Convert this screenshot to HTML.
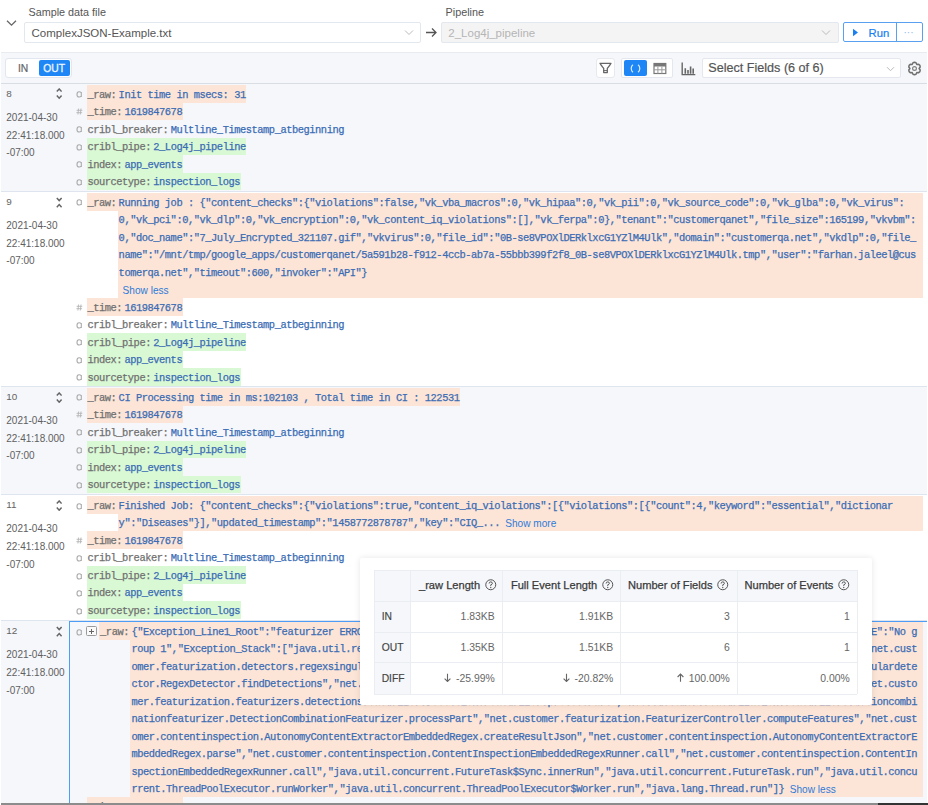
<!DOCTYPE html><html><head><meta charset="utf-8"><style>
*{box-sizing:border-box;margin:0;padding:0}
html,body{width:928px;height:805px;overflow:hidden;background:#fff;font-family:"Liberation Sans",sans-serif;position:relative}
.a{position:absolute;white-space:pre}
.m{font-family:"Liberation Mono",monospace;font-size:10.4px;letter-spacing:-0.458px;margin-top:1.6px;-webkit-text-stroke:0.25px}
.s{font-family:"Liberation Sans",sans-serif}
</style></head><body><svg class="a" style="left:5px;top:18px" width="13" height="10" viewBox="0 0 13 10"><path d="M2 2.8 L6.5 7.2 L11 2.8" fill="none" stroke="#666" stroke-width="1.3"/></svg><div class="a" style="left:28.5px;top:4.5px;font-size:10.8px;color:#555;line-height:14px">Sample data file</div><div class="a" style="left:24px;top:22px;width:397px;height:20.5px;border:1px solid #e3e8ef;border-radius:2px;background:#fff"></div><div class="a" style="left:31.5px;top:27px;font-size:11.5px;color:#555;line-height:13px">ComplexJSON-Example.txt</div><svg class="a" style="left:404px;top:29px" width="10" height="8" viewBox="0 0 10 8"><path d="M1 1.5 L5 5.5 L9 1.5" fill="none" stroke="#bbb" stroke-width="1"/></svg><svg class="a" style="left:425px;top:27px" width="13" height="11" viewBox="0 0 13 11"><path d="M1 5.5 H11 M7 1.5 L11 5.5 L7 9.5" fill="none" stroke="#555" stroke-width="1.3"/></svg><div class="a" style="left:445.6px;top:4.8px;font-size:10.8px;color:#555;line-height:14px">Pipeline</div><div class="a" style="left:441px;top:22px;width:398px;height:20.5px;border:1px solid #e3e8ef;border-radius:2px;background:#f4f4f4"></div><div class="a" style="left:448.3px;top:27px;font-size:11.5px;color:#b5b5b5;line-height:13px">2_Log4j_pipeline</div><svg class="a" style="left:821px;top:29px" width="10" height="8" viewBox="0 0 10 8"><path d="M1 1.5 L5 5.5 L9 1.5" fill="none" stroke="#bbb" stroke-width="1"/></svg><div class="a" style="left:843.4px;top:21.7px;width:80px;height:20.7px;border:1px solid #5aa0f0;border-radius:2px;background:#fff"></div><div class="a" style="left:895.5px;top:21.7px;width:1px;height:20.7px;background:#5aa0f0"></div><svg class="a" style="left:852px;top:28px" width="7" height="9" viewBox="0 0 7 9"><path d="M1 0.8 L6 4.5 L1 8.2Z" fill="#1a7ff0"/></svg><div class="a" style="left:868.5px;top:26.5px;font-size:11.3px;color:#1a7ff0;line-height:13px;-webkit-text-stroke:0.2px">Run</div><div class="a" style="left:903.5px;top:25.5px;font-size:10px;color:#8ab8f0;line-height:13px;letter-spacing:0px">···</div><div class="a" style="left:1px;top:52px;width:926px;height:32px;background:#f5f7fa;border-top:1px solid #e8ebf0;border-bottom:1px solid #d9dee5"></div><div class="a" style="left:5.2px;top:57.5px;width:67.3px;height:20.8px;background:#fff;border:1px solid #e2e6ee;border-radius:3px"></div><div class="a" style="left:18px;top:61.5px;font-size:10.3px;color:#666;line-height:13px;-webkit-text-stroke:0.2px">IN</div><div class="a" style="left:38.8px;top:60px;width:31.2px;height:15.7px;background:#1e87f5;border-radius:2px"></div><div class="a" style="left:43.2px;top:61.5px;font-size:10.3px;color:#eef5ff;line-height:13px;-webkit-text-stroke:0.3px">OUT</div><div class="a" style="left:595.5px;top:57.8px;width:19.5px;height:20.5px;background:#fff;border:1px solid #e6e9ee;border-radius:3px"></div><svg class="a" style="left:599px;top:62px" width="13" height="12" viewBox="0 0 13 12"><path d="M1 1.3 H12 Q11.5 2.5 8.3 6.3 V10.6 H4.7 V6.3 Q1.5 2.5 1 1.3 Z" fill="none" stroke="#666" stroke-width="1.3" stroke-linejoin="round"/><path d="M4.9 8.6 H8.1" stroke="#666" stroke-width="1"/></svg><div class="a" style="left:621px;top:57.8px;width:52px;height:20.5px;background:#fff;border:1px solid #e4e8ee;border-radius:2px"></div><div class="a" style="left:623.6px;top:60.3px;width:23.4px;height:15.8px;background:#1e87f5;border-radius:2px"></div><svg class="a" style="left:630px;top:64px" width="11" height="9" viewBox="0 0 11 9"><path d="M3 0.8 Q1.2 2 1.2 4.5 Q1.2 7 3 8.2 M8 0.8 Q9.8 2 9.8 4.5 Q9.8 7 8 8.2" fill="none" stroke="#dbeafe" stroke-width="1.2"/></svg><svg class="a" style="left:653px;top:61.5px" width="14" height="13" viewBox="0 0 14 13"><rect x="1" y="1.5" width="11.8" height="10" fill="none" stroke="#777" stroke-width="1.2"/><rect x="1" y="1.5" width="11.8" height="3" fill="#777"/><path d="M1 7.8 H12.8 M4.9 4.5 V11.5 M8.9 4.5 V11.5" stroke="#999" stroke-width="1"/></svg><svg class="a" style="left:681px;top:62px" width="15" height="14" viewBox="0 0 15 14"><path d="M1.2 0.5 V12.6 H14.3" fill="none" stroke="#666" stroke-width="1.4"/><path d="M4.3 11.8 V6.2 M7 11.8 V8 M9.6 11.8 V4.5 M12.2 11.8 V6.6" stroke="#666" stroke-width="1.6"/></svg><div class="a" style="left:702.2px;top:58.3px;width:198.5px;height:19.6px;background:#fff;border:1px solid #e4e8ee;border-radius:2px"></div><div class="a" style="left:708.3px;top:61.2px;font-size:12.6px;color:#555;line-height:15px;-webkit-text-stroke:0.2px">Select Fields (6 of 6)</div><svg class="a" style="left:886px;top:65.5px" width="9" height="7" viewBox="0 0 9 7"><path d="M1 1.2 L4.5 4.7 L8 1.2" fill="none" stroke="#bbb" stroke-width="1"/></svg><svg class="a" style="left:907px;top:60.5px" width="15" height="15" viewBox="0 0 15 15"><path d="M7.50 1.30 L9.03 1.80 L9.80 3.52 L11.67 3.33 L12.87 4.40 L13.20 5.97 L12.10 7.50 L13.20 9.03 L12.87 10.60 L11.67 11.67 L9.80 11.48 L9.03 13.20 L7.50 13.70 L5.97 13.20 L5.20 11.48 L3.33 11.67 L2.13 10.60 L1.80 9.03 L2.90 7.50 L1.80 5.97 L2.13 4.40 L3.33 3.33 L5.20 3.52 L5.97 1.80 Z" fill="none" stroke="#707070" stroke-width="1.5" stroke-linejoin="round"/><circle cx="7.5" cy="7.5" r="1.9" fill="none" stroke="#808080" stroke-width="1.2"/></svg><div class="a" style="left:1px;top:84px;width:926px;height:107px;background:#f5f7fb"></div><div class="a s" style="left:6.3px;top:88.0px;font-size:9.9px;color:#636363;line-height:12px">8</div><svg class="a" style="left:55.7px;top:88.4px" width="6.5" height="11.5" viewBox="0 0 6.5 11.5"><path d="M0.8 3.6 L3.2 1 L5.6 3.6 M0.8 7.6 L3.2 10.2 L5.6 7.6" fill="none" stroke="#666" stroke-width="1.5"/></svg><div class="a s" style="left:6.3px;top:112.0px;font-size:10px;color:#606060;line-height:12px">2021-04-30</div><div class="a s" style="left:6.3px;top:129.6px;font-size:10px;color:#606060;line-height:12px">22:41:18.000</div><div class="a s" style="left:6.3px;top:147.2px;font-size:10px;color:#606060;line-height:12px">-07:00</div><svg class="a" style="left:75.6px;top:91.2px" width="7" height="7" viewBox="0 0 7 7"><path d="M5.2 1.6 Q4.4 0.8 3.1 0.8 Q1 0.8 1 3.4 Q1 6 3.1 6 Q4.4 6 5.2 5 M5.3 0.9 V6.1" fill="none" stroke="#aaa" stroke-width="1.1"/></svg><div class="a" style="left:86.6px;top:85.0px;width:32.50999999999999px;height:17.5px;background:#fce5d6"></div><div class="a" style="left:118.60999999999999px;top:85.0px;width:127.70400000000001px;height:17.5px;background:#fce5d6"></div><div class="a m" style="left:87.39999999999999px;top:85.0px;line-height:17.5px;color:#707070">_raw:</div><div class="a m" style="left:118.60999999999999px;top:85.0px;line-height:17.5px;color:#3a6cb5">Init time in msecs: 31</div><svg class="a" style="left:75.6px;top:108.10000000000001px" width="7" height="7" viewBox="0 0 7 7"><path d="M2.6 0.5 L1.9 6.5 M5 0.5 L4.3 6.5 M0.6 2.3 H6.3 M0.4 4.7 H6.1" fill="none" stroke="#b5b5b5" stroke-width="0.9"/></svg><div class="a" style="left:86.6px;top:102.5px;width:38.29199999999999px;height:17.5px;background:#fce5d6"></div><div class="a" style="left:124.39199999999998px;top:102.5px;width:58.32px;height:17.5px;background:#fce5d6"></div><div class="a m" style="left:87.39999999999999px;top:102.5px;line-height:17.5px;color:#707070">_time:</div><div class="a m" style="left:124.39199999999998px;top:102.5px;line-height:17.5px;color:#3a6cb5">1619847678</div><svg class="a" style="left:75.6px;top:126.2px" width="7" height="7" viewBox="0 0 7 7"><path d="M5.2 1.6 Q4.4 0.8 3.1 0.8 Q1 0.8 1 3.4 Q1 6 3.1 6 Q4.4 6 5.2 5 M5.3 0.9 V6.1" fill="none" stroke="#aaa" stroke-width="1.1"/></svg><div class="a m" style="left:87.39999999999999px;top:120.0px;line-height:17.5px;color:#707070">cribl_breaker:</div><div class="a m" style="left:170.64800000000002px;top:120.0px;line-height:17.5px;color:#3a6cb5">Multline_Timestamp_atbeginning</div><svg class="a" style="left:75.6px;top:143.7px" width="7" height="7" viewBox="0 0 7 7"><path d="M5.2 1.6 Q4.4 0.8 3.1 0.8 Q1 0.8 1 3.4 Q1 6 3.1 6 Q4.4 6 5.2 5 M5.3 0.9 V6.1" fill="none" stroke="#aaa" stroke-width="1.1"/></svg><div class="a" style="left:86.6px;top:137.5px;width:67.20200000000003px;height:17.5px;background:#d9f8d4"></div><div class="a" style="left:153.30200000000002px;top:137.5px;width:93.012px;height:17.5px;background:#d9f8d4"></div><div class="a m" style="left:87.39999999999999px;top:137.5px;line-height:17.5px;color:#707070">cribl_pipe:</div><div class="a m" style="left:153.30200000000002px;top:137.5px;line-height:17.5px;color:#3a6cb5">2_Log4j_pipeline</div><svg class="a" style="left:75.6px;top:161.2px" width="7" height="7" viewBox="0 0 7 7"><path d="M5.2 1.6 Q4.4 0.8 3.1 0.8 Q1 0.8 1 3.4 Q1 6 3.1 6 Q4.4 6 5.2 5 M5.3 0.9 V6.1" fill="none" stroke="#aaa" stroke-width="1.1"/></svg><div class="a" style="left:86.6px;top:155.0px;width:38.29199999999999px;height:17.5px;background:#d9f8d4"></div><div class="a" style="left:124.39199999999998px;top:155.0px;width:58.32px;height:17.5px;background:#d9f8d4"></div><div class="a m" style="left:87.39999999999999px;top:155.0px;line-height:17.5px;color:#707070">index:</div><div class="a m" style="left:124.39199999999998px;top:155.0px;line-height:17.5px;color:#3a6cb5">app_events</div><svg class="a" style="left:75.6px;top:178.7px" width="7" height="7" viewBox="0 0 7 7"><path d="M5.2 1.6 Q4.4 0.8 3.1 0.8 Q1 0.8 1 3.4 Q1 6 3.1 6 Q4.4 6 5.2 5 M5.3 0.9 V6.1" fill="none" stroke="#aaa" stroke-width="1.1"/></svg><div class="a" style="left:86.6px;top:172.5px;width:67.20200000000003px;height:17.5px;background:#d9f8d4"></div><div class="a" style="left:153.30200000000002px;top:172.5px;width:87.23px;height:17.5px;background:#d9f8d4"></div><div class="a m" style="left:87.39999999999999px;top:172.5px;line-height:17.5px;color:#707070">sourcetype:</div><div class="a m" style="left:153.30200000000002px;top:172.5px;line-height:17.5px;color:#3a6cb5">inspection_logs</div><div class="a" style="left:1px;top:190.5px;width:926px;height:1.2px;background:#dfe5ee"></div><div class="a s" style="left:6.3px;top:196.2px;font-size:9.9px;color:#636363;line-height:12px">9</div><svg class="a" style="left:55.7px;top:196.6px" width="6.5" height="11.5" viewBox="0 0 6.5 11.5"><path d="M0.8 1 L3.2 3.6 L5.6 1 M0.8 10.2 L3.2 7.6 L5.6 10.2" fill="none" stroke="#666" stroke-width="1.5"/></svg><div class="a s" style="left:6.3px;top:220.2px;font-size:10px;color:#606060;line-height:12px">2021-04-30</div><div class="a s" style="left:6.3px;top:237.79999999999998px;font-size:10px;color:#606060;line-height:12px">22:41:18.000</div><div class="a s" style="left:6.3px;top:255.39999999999998px;font-size:10px;color:#606060;line-height:12px">-07:00</div><svg class="a" style="left:75.6px;top:199.39999999999998px" width="7" height="7" viewBox="0 0 7 7"><path d="M5.2 1.6 Q4.4 0.8 3.1 0.8 Q1 0.8 1 3.4 Q1 6 3.1 6 Q4.4 6 5.2 5 M5.3 0.9 V6.1" fill="none" stroke="#aaa" stroke-width="1.1"/></svg><div class="a" style="left:86.6px;top:193.2px;width:32.50999999999999px;height:17.5px;background:#fce5d6"></div><div class="a" style="left:117.60999999999999px;top:193.2px;width:805.1899999999999px;height:105.0px;background:#fce5d6"></div><div class="a m" style="left:87.39999999999999px;top:193.2px;line-height:17.5px;color:#707070">_raw:</div><div class="a m" style="left:118.60999999999999px;top:193.2px;line-height:17.5px;color:#3a6cb5">Running job : {"content_checks":{"violations":false,"vk_vba_macros":0,"vk_hipaa":0,"vk_pii":0,"vk_source_code":0,"vk_glba":0,"vk_virus":</div><div class="a m" style="left:118.60999999999999px;top:210.7px;line-height:17.5px;color:#3a6cb5">0,"vk_pci":0,"vk_dlp":0,"vk_encryption":0,"vk_content_iq_violations":[],"vk_ferpa":0},"tenant":"customerqanet","file_size":165199,"vkvbm":</div><div class="a m" style="left:118.60999999999999px;top:228.2px;line-height:17.5px;color:#3a6cb5">0,"doc_name":"7_July_Encrypted_321107.gif","vkvirus":0,"file_id":"0B-se8VPOXlDERklxcG1YZlM4Ulk","domain":"customerqa.net","vkdlp":0,"file_</div><div class="a m" style="left:118.60999999999999px;top:245.7px;line-height:17.5px;color:#3a6cb5">name":"/mnt/tmp/google_apps/customerqanet/5a591b28-f912-4ccb-ab7a-55bbb399f2f8_0B-se8VPOXlDERklxcG1YZlM4Ulk.tmp","user":"farhan.jaleel@cus</div><div class="a m" style="left:118.60999999999999px;top:263.2px;line-height:17.5px;color:#3a6cb5">tomerqa.net","timeout":600,"invoker":"API"}</div><div class="a s" style="left:122.60999999999999px;top:282.0px;line-height:17.5px;font-size:10.1px;color:#2f7ad8">Show less</div><svg class="a" style="left:75.6px;top:303.79999999999995px" width="7" height="7" viewBox="0 0 7 7"><path d="M2.6 0.5 L1.9 6.5 M5 0.5 L4.3 6.5 M0.6 2.3 H6.3 M0.4 4.7 H6.1" fill="none" stroke="#b5b5b5" stroke-width="0.9"/></svg><div class="a" style="left:86.6px;top:298.2px;width:38.29199999999999px;height:17.5px;background:#fce5d6"></div><div class="a" style="left:124.39199999999998px;top:298.2px;width:58.32px;height:17.5px;background:#fce5d6"></div><div class="a m" style="left:87.39999999999999px;top:298.2px;line-height:17.5px;color:#707070">_time:</div><div class="a m" style="left:124.39199999999998px;top:298.2px;line-height:17.5px;color:#3a6cb5">1619847678</div><svg class="a" style="left:75.6px;top:321.9px" width="7" height="7" viewBox="0 0 7 7"><path d="M5.2 1.6 Q4.4 0.8 3.1 0.8 Q1 0.8 1 3.4 Q1 6 3.1 6 Q4.4 6 5.2 5 M5.3 0.9 V6.1" fill="none" stroke="#aaa" stroke-width="1.1"/></svg><div class="a m" style="left:87.39999999999999px;top:315.7px;line-height:17.5px;color:#707070">cribl_breaker:</div><div class="a m" style="left:170.64800000000002px;top:315.7px;line-height:17.5px;color:#3a6cb5">Multline_Timestamp_atbeginning</div><svg class="a" style="left:75.6px;top:339.4px" width="7" height="7" viewBox="0 0 7 7"><path d="M5.2 1.6 Q4.4 0.8 3.1 0.8 Q1 0.8 1 3.4 Q1 6 3.1 6 Q4.4 6 5.2 5 M5.3 0.9 V6.1" fill="none" stroke="#aaa" stroke-width="1.1"/></svg><div class="a" style="left:86.6px;top:333.2px;width:67.20200000000003px;height:17.5px;background:#d9f8d4"></div><div class="a" style="left:153.30200000000002px;top:333.2px;width:93.012px;height:17.5px;background:#d9f8d4"></div><div class="a m" style="left:87.39999999999999px;top:333.2px;line-height:17.5px;color:#707070">cribl_pipe:</div><div class="a m" style="left:153.30200000000002px;top:333.2px;line-height:17.5px;color:#3a6cb5">2_Log4j_pipeline</div><svg class="a" style="left:75.6px;top:356.9px" width="7" height="7" viewBox="0 0 7 7"><path d="M5.2 1.6 Q4.4 0.8 3.1 0.8 Q1 0.8 1 3.4 Q1 6 3.1 6 Q4.4 6 5.2 5 M5.3 0.9 V6.1" fill="none" stroke="#aaa" stroke-width="1.1"/></svg><div class="a" style="left:86.6px;top:350.7px;width:38.29199999999999px;height:17.5px;background:#d9f8d4"></div><div class="a" style="left:124.39199999999998px;top:350.7px;width:58.32px;height:17.5px;background:#d9f8d4"></div><div class="a m" style="left:87.39999999999999px;top:350.7px;line-height:17.5px;color:#707070">index:</div><div class="a m" style="left:124.39199999999998px;top:350.7px;line-height:17.5px;color:#3a6cb5">app_events</div><svg class="a" style="left:75.6px;top:374.4px" width="7" height="7" viewBox="0 0 7 7"><path d="M5.2 1.6 Q4.4 0.8 3.1 0.8 Q1 0.8 1 3.4 Q1 6 3.1 6 Q4.4 6 5.2 5 M5.3 0.9 V6.1" fill="none" stroke="#aaa" stroke-width="1.1"/></svg><div class="a" style="left:86.6px;top:368.2px;width:67.20200000000003px;height:17.5px;background:#d9f8d4"></div><div class="a" style="left:153.30200000000002px;top:368.2px;width:87.23px;height:17.5px;background:#d9f8d4"></div><div class="a m" style="left:87.39999999999999px;top:368.2px;line-height:17.5px;color:#707070">sourcetype:</div><div class="a m" style="left:153.30200000000002px;top:368.2px;line-height:17.5px;color:#3a6cb5">inspection_logs</div><div class="a" style="left:1px;top:386.5px;width:926px;height:108.19999999999999px;background:#f5f7fb"></div><div class="a" style="left:1px;top:386.0px;width:926px;height:1.2px;background:#dfe5ee"></div><div class="a s" style="left:6.3px;top:391.2px;font-size:9.9px;color:#636363;line-height:12px">10</div><svg class="a" style="left:55.7px;top:391.59999999999997px" width="6.5" height="11.5" viewBox="0 0 6.5 11.5"><path d="M0.8 3.6 L3.2 1 L5.6 3.6 M0.8 7.6 L3.2 10.2 L5.6 7.6" fill="none" stroke="#666" stroke-width="1.5"/></svg><div class="a s" style="left:6.3px;top:415.2px;font-size:10px;color:#606060;line-height:12px">2021-04-30</div><div class="a s" style="left:6.3px;top:432.8px;font-size:10px;color:#606060;line-height:12px">22:41:18.000</div><div class="a s" style="left:6.3px;top:450.4px;font-size:10px;color:#606060;line-height:12px">-07:00</div><svg class="a" style="left:75.6px;top:394.4px" width="7" height="7" viewBox="0 0 7 7"><path d="M5.2 1.6 Q4.4 0.8 3.1 0.8 Q1 0.8 1 3.4 Q1 6 3.1 6 Q4.4 6 5.2 5 M5.3 0.9 V6.1" fill="none" stroke="#aaa" stroke-width="1.1"/></svg><div class="a" style="left:86.6px;top:388.2px;width:32.50999999999999px;height:17.5px;background:#fce5d6"></div><div class="a" style="left:118.60999999999999px;top:388.2px;width:341.638px;height:17.5px;background:#fce5d6"></div><div class="a m" style="left:87.39999999999999px;top:388.2px;line-height:17.5px;color:#707070">_raw:</div><div class="a m" style="left:118.60999999999999px;top:388.2px;line-height:17.5px;color:#3a6cb5">CI Processing time in ms:102103 , Total time in CI : 122531</div><svg class="a" style="left:75.6px;top:411.29999999999995px" width="7" height="7" viewBox="0 0 7 7"><path d="M2.6 0.5 L1.9 6.5 M5 0.5 L4.3 6.5 M0.6 2.3 H6.3 M0.4 4.7 H6.1" fill="none" stroke="#b5b5b5" stroke-width="0.9"/></svg><div class="a" style="left:86.6px;top:405.7px;width:38.29199999999999px;height:17.5px;background:#fce5d6"></div><div class="a" style="left:124.39199999999998px;top:405.7px;width:58.32px;height:17.5px;background:#fce5d6"></div><div class="a m" style="left:87.39999999999999px;top:405.7px;line-height:17.5px;color:#707070">_time:</div><div class="a m" style="left:124.39199999999998px;top:405.7px;line-height:17.5px;color:#3a6cb5">1619847678</div><svg class="a" style="left:75.6px;top:429.4px" width="7" height="7" viewBox="0 0 7 7"><path d="M5.2 1.6 Q4.4 0.8 3.1 0.8 Q1 0.8 1 3.4 Q1 6 3.1 6 Q4.4 6 5.2 5 M5.3 0.9 V6.1" fill="none" stroke="#aaa" stroke-width="1.1"/></svg><div class="a m" style="left:87.39999999999999px;top:423.2px;line-height:17.5px;color:#707070">cribl_breaker:</div><div class="a m" style="left:170.64800000000002px;top:423.2px;line-height:17.5px;color:#3a6cb5">Multline_Timestamp_atbeginning</div><svg class="a" style="left:75.6px;top:446.9px" width="7" height="7" viewBox="0 0 7 7"><path d="M5.2 1.6 Q4.4 0.8 3.1 0.8 Q1 0.8 1 3.4 Q1 6 3.1 6 Q4.4 6 5.2 5 M5.3 0.9 V6.1" fill="none" stroke="#aaa" stroke-width="1.1"/></svg><div class="a" style="left:86.6px;top:440.7px;width:67.20200000000003px;height:17.5px;background:#d9f8d4"></div><div class="a" style="left:153.30200000000002px;top:440.7px;width:93.012px;height:17.5px;background:#d9f8d4"></div><div class="a m" style="left:87.39999999999999px;top:440.7px;line-height:17.5px;color:#707070">cribl_pipe:</div><div class="a m" style="left:153.30200000000002px;top:440.7px;line-height:17.5px;color:#3a6cb5">2_Log4j_pipeline</div><svg class="a" style="left:75.6px;top:464.4px" width="7" height="7" viewBox="0 0 7 7"><path d="M5.2 1.6 Q4.4 0.8 3.1 0.8 Q1 0.8 1 3.4 Q1 6 3.1 6 Q4.4 6 5.2 5 M5.3 0.9 V6.1" fill="none" stroke="#aaa" stroke-width="1.1"/></svg><div class="a" style="left:86.6px;top:458.2px;width:38.29199999999999px;height:17.5px;background:#d9f8d4"></div><div class="a" style="left:124.39199999999998px;top:458.2px;width:58.32px;height:17.5px;background:#d9f8d4"></div><div class="a m" style="left:87.39999999999999px;top:458.2px;line-height:17.5px;color:#707070">index:</div><div class="a m" style="left:124.39199999999998px;top:458.2px;line-height:17.5px;color:#3a6cb5">app_events</div><svg class="a" style="left:75.6px;top:481.9px" width="7" height="7" viewBox="0 0 7 7"><path d="M5.2 1.6 Q4.4 0.8 3.1 0.8 Q1 0.8 1 3.4 Q1 6 3.1 6 Q4.4 6 5.2 5 M5.3 0.9 V6.1" fill="none" stroke="#aaa" stroke-width="1.1"/></svg><div class="a" style="left:86.6px;top:475.7px;width:67.20200000000003px;height:17.5px;background:#d9f8d4"></div><div class="a" style="left:153.30200000000002px;top:475.7px;width:87.23px;height:17.5px;background:#d9f8d4"></div><div class="a m" style="left:87.39999999999999px;top:475.7px;line-height:17.5px;color:#707070">sourcetype:</div><div class="a m" style="left:153.30200000000002px;top:475.7px;line-height:17.5px;color:#3a6cb5">inspection_logs</div><div class="a" style="left:1px;top:494.2px;width:926px;height:1.2px;background:#dfe5ee"></div><div class="a s" style="left:6.3px;top:499.3px;font-size:9.9px;color:#636363;line-height:12px">11</div><svg class="a" style="left:55.7px;top:499.7px" width="6.5" height="11.5" viewBox="0 0 6.5 11.5"><path d="M0.8 3.6 L3.2 1 L5.6 3.6 M0.8 7.6 L3.2 10.2 L5.6 7.6" fill="none" stroke="#666" stroke-width="1.5"/></svg><div class="a s" style="left:6.3px;top:523.3px;font-size:10px;color:#606060;line-height:12px">2021-04-30</div><div class="a s" style="left:6.3px;top:540.9px;font-size:10px;color:#606060;line-height:12px">22:41:18.000</div><div class="a s" style="left:6.3px;top:558.5px;font-size:10px;color:#606060;line-height:12px">-07:00</div><svg class="a" style="left:75.6px;top:502.5px" width="7" height="7" viewBox="0 0 7 7"><path d="M5.2 1.6 Q4.4 0.8 3.1 0.8 Q1 0.8 1 3.4 Q1 6 3.1 6 Q4.4 6 5.2 5 M5.3 0.9 V6.1" fill="none" stroke="#aaa" stroke-width="1.1"/></svg><div class="a" style="left:86.6px;top:496.3px;width:32.50999999999999px;height:17.5px;background:#fce5d6"></div><div class="a" style="left:117.60999999999999px;top:496.3px;width:805.1899999999999px;height:35.0px;background:#fce5d6"></div><div class="a m" style="left:87.39999999999999px;top:496.3px;line-height:17.5px;color:#707070">_raw:</div><div class="a m" style="left:118.60999999999999px;top:496.3px;line-height:17.5px;color:#3a6cb5">Finished Job: {"content_checks":{"violations":true,"content_iq_violations":[{"violations":[{"count":4,"keyword":"essential","dictionar</div><div class="a m" style="left:118.60999999999999px;top:513.8px;line-height:17.5px;color:#3a6cb5">y":"Diseases"}],"updated_timestamp":"1458772878787","key":"CIQ_...</div><div class="a s" style="left:505.222px;top:515.0999999999999px;line-height:17.5px;font-size:10.1px;color:#2f7ad8">Show more</div><svg class="a" style="left:75.6px;top:536.9px" width="7" height="7" viewBox="0 0 7 7"><path d="M2.6 0.5 L1.9 6.5 M5 0.5 L4.3 6.5 M0.6 2.3 H6.3 M0.4 4.7 H6.1" fill="none" stroke="#b5b5b5" stroke-width="0.9"/></svg><div class="a" style="left:86.6px;top:531.3px;width:38.29199999999999px;height:17.5px;background:#fce5d6"></div><div class="a" style="left:124.39199999999998px;top:531.3px;width:58.32px;height:17.5px;background:#fce5d6"></div><div class="a m" style="left:87.39999999999999px;top:531.3px;line-height:17.5px;color:#707070">_time:</div><div class="a m" style="left:124.39199999999998px;top:531.3px;line-height:17.5px;color:#3a6cb5">1619847678</div><svg class="a" style="left:75.6px;top:555.0px" width="7" height="7" viewBox="0 0 7 7"><path d="M5.2 1.6 Q4.4 0.8 3.1 0.8 Q1 0.8 1 3.4 Q1 6 3.1 6 Q4.4 6 5.2 5 M5.3 0.9 V6.1" fill="none" stroke="#aaa" stroke-width="1.1"/></svg><div class="a m" style="left:87.39999999999999px;top:548.8px;line-height:17.5px;color:#707070">cribl_breaker:</div><div class="a m" style="left:170.64800000000002px;top:548.8px;line-height:17.5px;color:#3a6cb5">Multline_Timestamp_atbeginning</div><svg class="a" style="left:75.6px;top:572.5px" width="7" height="7" viewBox="0 0 7 7"><path d="M5.2 1.6 Q4.4 0.8 3.1 0.8 Q1 0.8 1 3.4 Q1 6 3.1 6 Q4.4 6 5.2 5 M5.3 0.9 V6.1" fill="none" stroke="#aaa" stroke-width="1.1"/></svg><div class="a" style="left:86.6px;top:566.3px;width:67.20200000000003px;height:17.5px;background:#d9f8d4"></div><div class="a" style="left:153.30200000000002px;top:566.3px;width:93.012px;height:17.5px;background:#d9f8d4"></div><div class="a m" style="left:87.39999999999999px;top:566.3px;line-height:17.5px;color:#707070">cribl_pipe:</div><div class="a m" style="left:153.30200000000002px;top:566.3px;line-height:17.5px;color:#3a6cb5">2_Log4j_pipeline</div><svg class="a" style="left:75.6px;top:590.0px" width="7" height="7" viewBox="0 0 7 7"><path d="M5.2 1.6 Q4.4 0.8 3.1 0.8 Q1 0.8 1 3.4 Q1 6 3.1 6 Q4.4 6 5.2 5 M5.3 0.9 V6.1" fill="none" stroke="#aaa" stroke-width="1.1"/></svg><div class="a" style="left:86.6px;top:583.8px;width:38.29199999999999px;height:17.5px;background:#d9f8d4"></div><div class="a" style="left:124.39199999999998px;top:583.8px;width:58.32px;height:17.5px;background:#d9f8d4"></div><div class="a m" style="left:87.39999999999999px;top:583.8px;line-height:17.5px;color:#707070">index:</div><div class="a m" style="left:124.39199999999998px;top:583.8px;line-height:17.5px;color:#3a6cb5">app_events</div><svg class="a" style="left:75.6px;top:607.5px" width="7" height="7" viewBox="0 0 7 7"><path d="M5.2 1.6 Q4.4 0.8 3.1 0.8 Q1 0.8 1 3.4 Q1 6 3.1 6 Q4.4 6 5.2 5 M5.3 0.9 V6.1" fill="none" stroke="#aaa" stroke-width="1.1"/></svg><div class="a" style="left:86.6px;top:601.3px;width:67.20200000000003px;height:17.5px;background:#d9f8d4"></div><div class="a" style="left:153.30200000000002px;top:601.3px;width:87.23px;height:17.5px;background:#d9f8d4"></div><div class="a m" style="left:87.39999999999999px;top:601.3px;line-height:17.5px;color:#707070">sourcetype:</div><div class="a m" style="left:153.30200000000002px;top:601.3px;line-height:17.5px;color:#3a6cb5">inspection_logs</div><div class="a" style="left:1px;top:620.5px;width:926px;height:184.5px;background:#f5f7fb"></div><div class="a" style="left:1px;top:620.0px;width:926px;height:1.2px;background:#dfe5ee"></div><div class="a s" style="left:6.3px;top:625.3px;font-size:9.9px;color:#636363;line-height:12px">12</div><svg class="a" style="left:55.7px;top:625.6999999999999px" width="6.5" height="11.5" viewBox="0 0 6.5 11.5"><path d="M0.8 1 L3.2 3.6 L5.6 1 M0.8 10.2 L3.2 7.6 L5.6 10.2" fill="none" stroke="#666" stroke-width="1.5"/></svg><div class="a s" style="left:6.3px;top:649.3px;font-size:10px;color:#606060;line-height:12px">2021-04-30</div><div class="a s" style="left:6.3px;top:666.9px;font-size:10px;color:#606060;line-height:12px">22:41:18.000</div><div class="a s" style="left:6.3px;top:684.5px;font-size:10px;color:#606060;line-height:12px">-07:00</div><svg class="a" style="left:75.6px;top:628.5px" width="7" height="7" viewBox="0 0 7 7"><path d="M5.2 1.6 Q4.4 0.8 3.1 0.8 Q1 0.8 1 3.4 Q1 6 3.1 6 Q4.4 6 5.2 5 M5.3 0.9 V6.1" fill="none" stroke="#aaa" stroke-width="1.1"/></svg><div class="a" style="left:86.4px;top:626.3px;width:10.5px;height:10px;border:1.2px solid #9a9a9a;border-radius:1.5px;background:#fafafa"></div><div class="a" style="left:89.2px;top:630.8px;width:5px;height:1.1px;background:#666"></div><div class="a" style="left:91.1px;top:628.9px;width:1.1px;height:5px;background:#666"></div><div class="a" style="left:99.3px;top:622.3px;width:32.61px;height:17.5px;background:#fce5d6"></div><div class="a" style="left:130.41px;top:622.3px;width:792.39px;height:175.0px;background:#fce5d6"></div><div class="a m" style="left:100.1px;top:622.3px;line-height:17.5px;color:#707070">_raw:</div><div class="a m" style="left:131.41px;top:622.3px;line-height:17.5px;color:#3a6cb5">{"Exception_Line1_Root":"featurizer ERROR: No match found","Exception_Line1_Message":"featurizer ERROR","Exception_Line2_Root":"E":"No g</div><div class="a m" style="left:131.41px;top:639.8px;line-height:17.5px;color:#3a6cb5">roup 1","Exception_Stack":["java.util.regex.Matcher.group(Matcher.java:536)","net.customer.featurization.detectors.regexsing","gnet.cust</div><div class="a m" style="left:131.41px;top:657.3px;line-height:17.5px;color:#3a6cb5">omer.featurization.detectors.regexsingular.RegexSingularDetector.detect","net.customer.featurization.detectors.regexsing","net.culardete</div><div class="a m" style="left:131.41px;top:674.8px;line-height:17.5px;color:#3a6cb5">ctor.RegexDetector.findDetections","net.customer.featurization.detectors.regexsingularRegexDetector.detect","net.customer.featuret.custo</div><div class="a m" style="left:131.41px;top:692.3px;line-height:17.5px;color:#3a6cb5">mer.featurization.featurizers.detectionsfeaturizer.DetectionsFeaturizer.processPart","net.customer.featurization.featurizers.detioncombi</div><div class="a m" style="left:131.41px;top:709.8px;line-height:17.5px;color:#3a6cb5">nationfeaturizer.DetectionCombinationFeaturizer.processPart","net.customer.featurization.FeaturizerController.computeFeatures","net.cust</div><div class="a m" style="left:131.41px;top:727.3px;line-height:17.5px;color:#3a6cb5">omer.contentinspection.AutonomyContentExtractorEmbeddedRegex.createResultJson","net.customer.contentinspection.AutonomyContentExtractorE</div><div class="a m" style="left:131.41px;top:744.8px;line-height:17.5px;color:#3a6cb5">mbeddedRegex.parse","net.customer.contentinspection.ContentInspectionEmbeddedRegexRunner.call","net.customer.contentinspection.ContentIn</div><div class="a m" style="left:131.41px;top:762.3px;line-height:17.5px;color:#3a6cb5">spectionEmbeddedRegexRunner.call","java.util.concurrent.FutureTask$Sync.innerRun","java.util.concurrent.FutureTask.run","java.util.concu</div><div class="a m" style="left:131.41px;top:779.8px;line-height:17.5px;color:#3a6cb5">rrent.ThreadPoolExecutor.runWorker","java.util.concurrent.ThreadPoolExecutor$Worker.run","java.lang.Thread.run"]}</div><div class="a s" style="left:789.776px;top:781.0999999999999px;line-height:17.5px;font-size:10.1px;color:#2f7ad8">Show less</div><svg class="a" style="left:75.6px;top:802.9px" width="7" height="7" viewBox="0 0 7 7"><path d="M2.6 0.5 L1.9 6.5 M5 0.5 L4.3 6.5 M0.6 2.3 H6.3 M0.4 4.7 H6.1" fill="none" stroke="#b5b5b5" stroke-width="0.9"/></svg><div class="a" style="left:86.6px;top:797.3px;width:38.29199999999999px;height:17.5px;background:#fce5d6"></div><div class="a" style="left:124.39199999999998px;top:797.3px;width:58.32px;height:17.5px;background:#fce5d6"></div><div class="a m" style="left:87.39999999999999px;top:797.3px;line-height:17.5px;color:#707070">_time:</div><div class="a m" style="left:124.39199999999998px;top:797.3px;line-height:17.5px;color:#3a6cb5">1619847678</div><svg class="a" style="left:75.6px;top:821.0px" width="7" height="7" viewBox="0 0 7 7"><path d="M5.2 1.6 Q4.4 0.8 3.1 0.8 Q1 0.8 1 3.4 Q1 6 3.1 6 Q4.4 6 5.2 5 M5.3 0.9 V6.1" fill="none" stroke="#aaa" stroke-width="1.1"/></svg><div class="a m" style="left:87.39999999999999px;top:814.8px;line-height:17.5px;color:#707070">cribl_breaker:</div><div class="a m" style="left:170.64800000000002px;top:814.8px;line-height:17.5px;color:#3a6cb5">Multline_Timestamp_atbeginning</div><svg class="a" style="left:75.6px;top:838.5px" width="7" height="7" viewBox="0 0 7 7"><path d="M5.2 1.6 Q4.4 0.8 3.1 0.8 Q1 0.8 1 3.4 Q1 6 3.1 6 Q4.4 6 5.2 5 M5.3 0.9 V6.1" fill="none" stroke="#aaa" stroke-width="1.1"/></svg><div class="a" style="left:86.6px;top:832.3px;width:67.20200000000003px;height:17.5px;background:#d9f8d4"></div><div class="a" style="left:153.30200000000002px;top:832.3px;width:93.012px;height:17.5px;background:#d9f8d4"></div><div class="a m" style="left:87.39999999999999px;top:832.3px;line-height:17.5px;color:#707070">cribl_pipe:</div><div class="a m" style="left:153.30200000000002px;top:832.3px;line-height:17.5px;color:#3a6cb5">2_Log4j_pipeline</div><svg class="a" style="left:75.6px;top:856.0px" width="7" height="7" viewBox="0 0 7 7"><path d="M5.2 1.6 Q4.4 0.8 3.1 0.8 Q1 0.8 1 3.4 Q1 6 3.1 6 Q4.4 6 5.2 5 M5.3 0.9 V6.1" fill="none" stroke="#aaa" stroke-width="1.1"/></svg><div class="a" style="left:86.6px;top:849.8px;width:38.29199999999999px;height:17.5px;background:#d9f8d4"></div><div class="a" style="left:124.39199999999998px;top:849.8px;width:58.32px;height:17.5px;background:#d9f8d4"></div><div class="a m" style="left:87.39999999999999px;top:849.8px;line-height:17.5px;color:#707070">index:</div><div class="a m" style="left:124.39199999999998px;top:849.8px;line-height:17.5px;color:#3a6cb5">app_events</div><svg class="a" style="left:75.6px;top:873.5px" width="7" height="7" viewBox="0 0 7 7"><path d="M5.2 1.6 Q4.4 0.8 3.1 0.8 Q1 0.8 1 3.4 Q1 6 3.1 6 Q4.4 6 5.2 5 M5.3 0.9 V6.1" fill="none" stroke="#aaa" stroke-width="1.1"/></svg><div class="a" style="left:86.6px;top:867.3px;width:67.20200000000003px;height:17.5px;background:#d9f8d4"></div><div class="a" style="left:153.30200000000002px;top:867.3px;width:87.23px;height:17.5px;background:#d9f8d4"></div><div class="a m" style="left:87.39999999999999px;top:867.3px;line-height:17.5px;color:#707070">sourcetype:</div><div class="a m" style="left:153.30200000000002px;top:867.3px;line-height:17.5px;color:#3a6cb5">inspection_logs</div><div class="a" style="left:69.4px;top:620.8px;width:858px;height:190px;border:1.3px solid #4d9cf5;border-right:none"></div><div class="a" style="left:1px;top:802.6px;width:877px;height:3px;background:#8c8c8c"></div><div class="a" style="left:878px;top:802.6px;width:50px;height:3px;background:#333"></div><div class="a" style="left:360px;top:558px;width:512px;height:147px;background:#fff;box-shadow:0 0 6px rgba(0,0,0,0.10);border-radius:2px"></div><div class="a" style="left:374.4px;top:570.4px;width:482.6px;height:30.600000000000023px;background:#f5f7fa"></div><div class="a" style="left:374.4px;top:570.4px;width:36.200000000000045px;height:123.60000000000002px;background:#f5f7fa"></div><div class="a" style="left:373.9px;top:570.4px;width:1px;height:123.60000000000002px;background:#eaedf2"></div><div class="a" style="left:410.1px;top:570.4px;width:1px;height:123.60000000000002px;background:#eaedf2"></div><div class="a" style="left:501.5px;top:570.4px;width:1px;height:123.60000000000002px;background:#eaedf2"></div><div class="a" style="left:620.0px;top:570.4px;width:1px;height:123.60000000000002px;background:#eaedf2"></div><div class="a" style="left:736.5px;top:570.4px;width:1px;height:123.60000000000002px;background:#eaedf2"></div><div class="a" style="left:856.5px;top:570.4px;width:1px;height:123.60000000000002px;background:#eaedf2"></div><div class="a" style="left:374.4px;top:569.9px;width:482.6px;height:1px;background:#eaedf2"></div><div class="a" style="left:374.4px;top:600.5px;width:482.6px;height:1px;background:#eaedf2"></div><div class="a" style="left:374.4px;top:631.5px;width:482.6px;height:1px;background:#eaedf2"></div><div class="a" style="left:374.4px;top:662.0px;width:482.6px;height:1px;background:#eaedf2"></div><div class="a" style="left:374.4px;top:693.5px;width:482.6px;height:1px;background:#eaedf2"></div><div class="a s" style="left:419px;top:579.0px;font-size:11.1px;color:#3a3a3a;line-height:13px;-webkit-text-stroke:0.2px"><span style="display:inline-block;-webkit-text-stroke:0.25px">_raw Length</span><svg style="display:inline-block;vertical-align:-1.5px;margin-left:5px" width="11.5" height="11.5" viewBox="0 0 11.5 11.5"><circle cx="5.75" cy="5.75" r="5" fill="none" stroke="#555" stroke-width="1"/><path d="M4.1 4.5 Q4.1 2.9 5.75 2.9 Q7.4 2.9 7.4 4.4 Q7.4 5.3 5.75 5.8 V6.9" fill="none" stroke="#555" stroke-width="1"/><circle cx="5.75" cy="8.5" r="0.65" fill="#555"/></svg></div><div class="a s" style="left:510.9px;top:579.0px;font-size:11.1px;color:#3a3a3a;line-height:13px;-webkit-text-stroke:0.2px"><span style="display:inline-block;-webkit-text-stroke:0.25px">Full Event Length</span><svg style="display:inline-block;vertical-align:-1.5px;margin-left:5px" width="11.5" height="11.5" viewBox="0 0 11.5 11.5"><circle cx="5.75" cy="5.75" r="5" fill="none" stroke="#555" stroke-width="1"/><path d="M4.1 4.5 Q4.1 2.9 5.75 2.9 Q7.4 2.9 7.4 4.4 Q7.4 5.3 5.75 5.8 V6.9" fill="none" stroke="#555" stroke-width="1"/><circle cx="5.75" cy="8.5" r="0.65" fill="#555"/></svg></div><div class="a s" style="left:628px;top:579.0px;font-size:11.1px;color:#3a3a3a;line-height:13px;-webkit-text-stroke:0.2px"><span style="display:inline-block;-webkit-text-stroke:0.25px">Number of Fields</span><svg style="display:inline-block;vertical-align:-1.5px;margin-left:5px" width="11.5" height="11.5" viewBox="0 0 11.5 11.5"><circle cx="5.75" cy="5.75" r="5" fill="none" stroke="#555" stroke-width="1"/><path d="M4.1 4.5 Q4.1 2.9 5.75 2.9 Q7.4 2.9 7.4 4.4 Q7.4 5.3 5.75 5.8 V6.9" fill="none" stroke="#555" stroke-width="1"/><circle cx="5.75" cy="8.5" r="0.65" fill="#555"/></svg></div><div class="a s" style="left:744.5px;top:579.0px;font-size:11.1px;color:#3a3a3a;line-height:13px;-webkit-text-stroke:0.2px"><span style="display:inline-block;-webkit-text-stroke:0.25px">Number of Events</span><svg style="display:inline-block;vertical-align:-1.5px;margin-left:5px" width="11.5" height="11.5" viewBox="0 0 11.5 11.5"><circle cx="5.75" cy="5.75" r="5" fill="none" stroke="#555" stroke-width="1"/><path d="M4.1 4.5 Q4.1 2.9 5.75 2.9 Q7.4 2.9 7.4 4.4 Q7.4 5.3 5.75 5.8 V6.9" fill="none" stroke="#555" stroke-width="1"/><circle cx="5.75" cy="8.5" r="0.65" fill="#555"/></svg></div><div class="a s" style="left:381.7px;top:610.3px;font-size:10.3px;color:#444;line-height:13px;-webkit-text-stroke:0.15px">IN</div><div class="a s" style="right:433.3px;top:610.3px;font-size:10.4px;color:#666;line-height:13px">1.83KB</div><div class="a s" style="right:314.79999999999995px;top:610.3px;font-size:10.4px;color:#666;line-height:13px">1.91KB</div><div class="a s" style="right:198.29999999999995px;top:610.3px;font-size:10.4px;color:#666;line-height:13px">3</div><div class="a s" style="right:78.29999999999995px;top:610.3px;font-size:10.4px;color:#666;line-height:13px">1</div><div class="a s" style="left:381.7px;top:641.3px;font-size:10.3px;color:#444;line-height:13px;-webkit-text-stroke:0.15px">OUT</div><div class="a s" style="right:433.3px;top:641.3px;font-size:10.4px;color:#666;line-height:13px">1.35KB</div><div class="a s" style="right:314.79999999999995px;top:641.3px;font-size:10.4px;color:#666;line-height:13px">1.51KB</div><div class="a s" style="right:198.29999999999995px;top:641.3px;font-size:10.4px;color:#666;line-height:13px">6</div><div class="a s" style="right:78.29999999999995px;top:641.3px;font-size:10.4px;color:#666;line-height:13px">1</div><div class="a s" style="left:381.7px;top:671.8px;font-size:10.3px;color:#444;line-height:13px;-webkit-text-stroke:0.15px">DIFF</div><div class="a s" style="right:433.3px;top:671.8px;font-size:10.4px;color:#666;line-height:13px"><svg style="display:inline-block;vertical-align:-0.5px;margin-right:5px" width="7" height="9.5" viewBox="0 0 7 9.5"><path d="M3.5 0.8 V8.5 M0.6 5.6 L3.5 8.5 L6.4 5.6" fill="none" stroke="#666" stroke-width="1.1"/></svg>-25.99%</div><div class="a s" style="right:314.79999999999995px;top:671.8px;font-size:10.4px;color:#666;line-height:13px"><svg style="display:inline-block;vertical-align:-0.5px;margin-right:5px" width="7" height="9.5" viewBox="0 0 7 9.5"><path d="M3.5 0.8 V8.5 M0.6 5.6 L3.5 8.5 L6.4 5.6" fill="none" stroke="#666" stroke-width="1.1"/></svg>-20.82%</div><div class="a s" style="right:198.29999999999995px;top:671.8px;font-size:10.4px;color:#666;line-height:13px"><svg style="display:inline-block;vertical-align:-0.5px;margin-right:5px" width="7" height="9.5" viewBox="0 0 7 9.5"><path d="M3.5 8.8 V1.1 M0.6 4 L3.5 1.1 L6.4 4" fill="none" stroke="#666" stroke-width="1.1"/></svg>100.00%</div><div class="a s" style="right:78.29999999999995px;top:671.8px;font-size:10.4px;color:#666;line-height:13px">0.00%</div></body></html>
